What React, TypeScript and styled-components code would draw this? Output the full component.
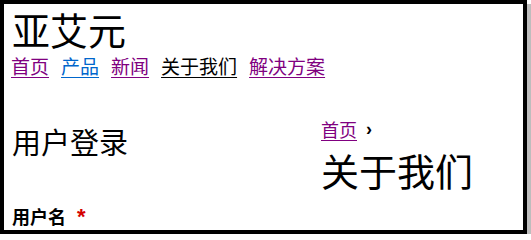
import styled, { createGlobalStyle } from "styled-components";

const GlobalStyle = createGlobalStyle`
  html, body {
    margin: 0;
    padding: 0;
    background: #ffffff;
  }
  body {
    font-family: "Liberation Sans", "Noto Sans CJK SC", sans-serif;
    color: #000000;
  }
`;

const Frame = styled.div`
  box-sizing: border-box;
  width: 527px;
  height: 234px;
  border: 4px solid #000000;
  box-shadow: 4px 4px 0 #bdbdbd;
  background: #ffffff;
  padding: 0 8px;
  overflow: hidden;
`;

const Header = styled.header`
  display: flex;
  flex-direction: column;
`;

const SiteTitle = styled.h1`
  margin: 6px 0 0;
  font: 400 38px/44px "Liberation Sans", "Noto Sans CJK SC", sans-serif;
`;

const Nav = styled.nav`
  display: flex;
  gap: 12px;
  margin: 2px 0 0 -1px;
`;

const NavLink = styled.a<{ $state: "visited" | "fresh" | "current" }>`
  font: 400 19px/24px "Liberation Sans", "Noto Sans CJK SC", sans-serif;
  text-decoration: underline;
  text-underline-offset: 3px;
  color: ${({ $state }) =>
    $state === "visited" ? "#800080" : $state === "fresh" ? "#0066cc" : "#000000"};
`;

const Main = styled.div`
  display: flex;
  margin-top: 46px;
`;

const LeftCol = styled.section`
  width: 309px;
  flex-shrink: 0;
`;

const RightCol = styled.section`
  flex: 1;
  margin-top: -7px;
`;

const SectionTitle = styled.h2`
  margin: 0;
  font: 400 29px/36px "Liberation Sans", "Noto Sans CJK SC", sans-serif;
`;

const FieldLabel = styled.label`
  display: block;
  margin-top: 43px;
  font: 700 18px/24px "Liberation Sans", "Noto Sans CJK SC", sans-serif;
`;

const Required = styled.span`
  color: #d40000;
  margin-left: 11px;
  font-size: 22px;
`;

const Breadcrumb = styled.div`
  display: flex;
  align-items: baseline;
  gap: 9px;
  font: 400 18px/24px "Liberation Sans", "Noto Sans CJK SC", sans-serif;
`;

const Crumb = styled.a`
  color: #800080;
  text-decoration: underline;
  text-underline-offset: 3px;
`;

const Sep = styled.span`
  font-weight: 700;
  position: relative;
  top: -2px;
`;

const PageTitle = styled.h1`
  margin: 6px 0 0;
  font: 400 38px/48px "Liberation Sans", "Noto Sans CJK SC", sans-serif;
`;

const App = () => {
  return (
    <>
      <GlobalStyle />
      <Frame>
        <Header>
          <SiteTitle>亚艾元</SiteTitle>
          <Nav>
            <NavLink href="#" $state="visited">首页</NavLink>
            <NavLink href="#" $state="fresh">产品</NavLink>
            <NavLink href="#" $state="visited">新闻</NavLink>
            <NavLink href="#" $state="current">关于我们</NavLink>
            <NavLink href="#" $state="visited">解决方案</NavLink>
          </Nav>
        </Header>
        <Main>
          <LeftCol>
            <SectionTitle>用户登录</SectionTitle>
            <FieldLabel>
              用户名<Required>*</Required>
            </FieldLabel>
          </LeftCol>
          <RightCol>
            <Breadcrumb>
              <Crumb href="#">首页</Crumb>
              <Sep>›</Sep>
            </Breadcrumb>
            <PageTitle>关于我们</PageTitle>
          </RightCol>
        </Main>
      </Frame>
    </>
  );
};

export default App;
